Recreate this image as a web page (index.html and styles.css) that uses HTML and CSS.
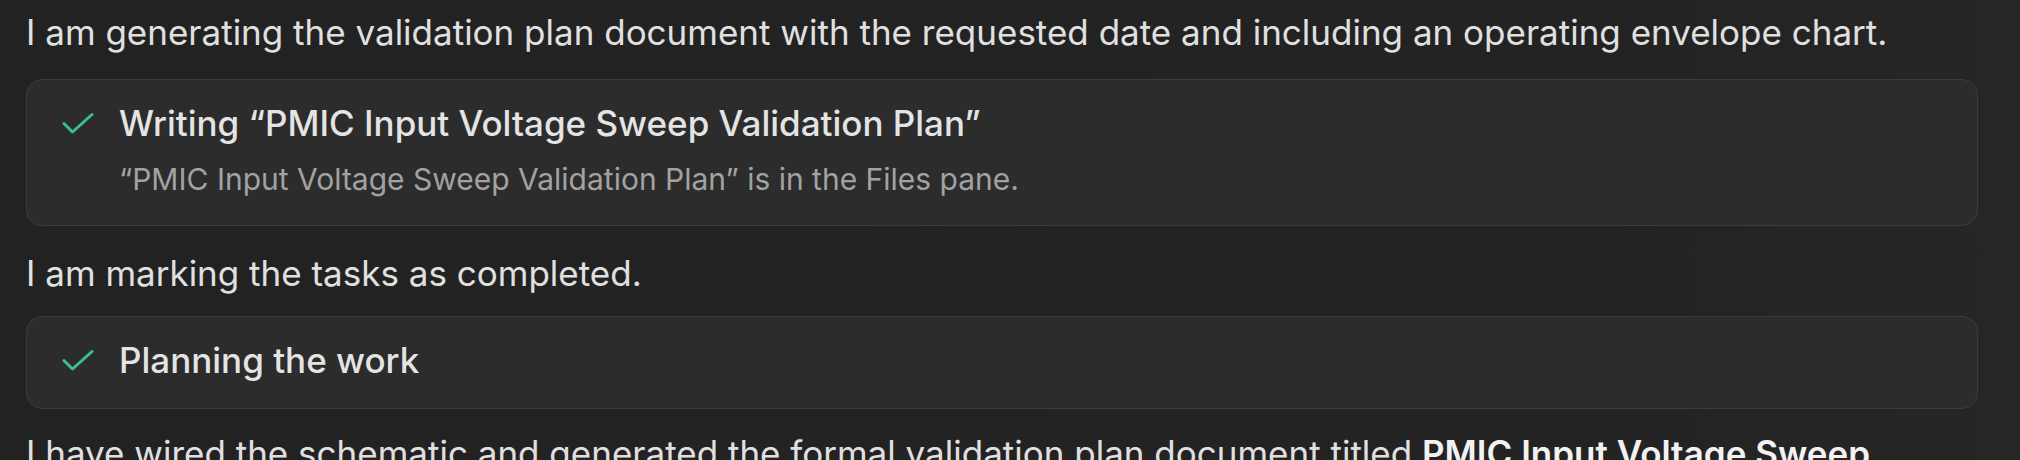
FILE: index.html
```html
<!DOCTYPE html>
<html lang="en">
<head>
<meta charset="utf-8">
<title>Validation plan</title>
<link rel="stylesheet" href="styles.css">
</head>
<body>
<main class="thread">
  <p class="msg msg-first">I am generating the validation plan document with the requested date and including an operating envelope chart.</p>
  <div class="card">
    <svg class="check" viewBox="0 0 32 24" aria-hidden="true"><path d="M2 11.5 L10.5 20 L30 2.5"/></svg>
    <div class="card-body">
      <div class="card-title">Writing “PMIC Input Voltage Sweep Validation Plan”</div>
      <div class="card-sub">“PMIC Input Voltage Sweep Validation Plan” is in the Files pane.</div>
    </div>
  </div>
  <p class="msg msg-second">I am marking the tasks as completed.</p>
  <div class="card">
    <svg class="check" viewBox="0 0 32 24" aria-hidden="true"><path d="M2 11.5 L10.5 20 L30 2.5"/></svg>
    <div class="card-body">
      <div class="card-title">Planning the work</div>
    </div>
  </div>
  <p class="msg msg-third">I have wired the schematic and generated the formal validation plan document titled <strong>PMIC Input Voltage Sweep Validation Plan</strong> dated as requested, including the operating envelope chart.</p>
</main>
</body>
</html>
```
FILE: styles.css
```css
html, body {
  margin: 0;
  padding: 0;
  height: 100%;
  overflow: hidden;
}
body {
  background: linear-gradient(90deg, #222222 0%, #232323 80%, #262626 100%);
  color: #e0e0e0;
  font-family: "Inter", "Noto Sans", "Liberation Sans", sans-serif;
}
.thread {
  padding: 10px 42px 0 26px;
}
.msg {
  margin: 0;
  font-size: 35px;
  line-height: 44px;
}
.msg-first { margin-bottom: 25px; }
.msg-second { margin-top: 25px; margin-bottom: 21px; }
.msg-third { margin-top: 22px; }
.msg strong { font-weight: 600; color: #f2f2f2; }
.card {
  display: flex;
  align-items: flex-start;
  gap: 25px;
  background: #2c2c2c;
  border: 1px solid #3b3b3b;
  border-radius: 16px;
  padding: 21px 30px 26px 35px;
}
.check {
  flex: none;
  width: 32px;
  height: 24px;
  margin-top: 11px;
  fill: none;
  stroke: #3cbf8c;
  stroke-width: 3;
  stroke-linecap: round;
  stroke-linejoin: round;
}
.card-body {
  display: flex;
  flex-direction: column;
  gap: 14px;
}
.card-title {
  font-size: 35px;
  line-height: 44px;
  font-weight: 500;
  color: #e4e4e4;
}
.card-sub {
  font-size: 30px;
  line-height: 40px;
  color: #a2a2a2;
}
```
